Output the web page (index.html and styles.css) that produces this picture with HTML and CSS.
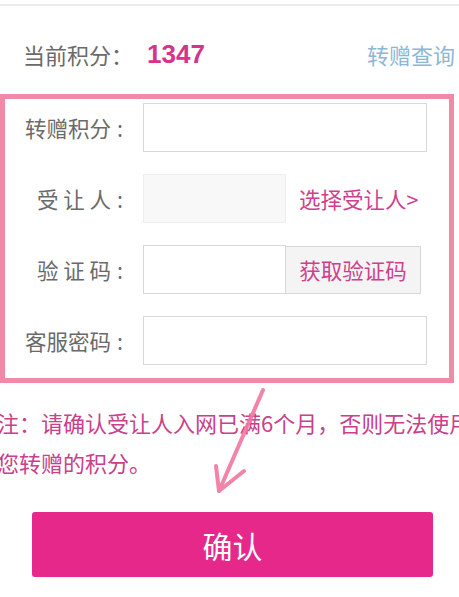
FILE: index.html
```html
<!DOCTYPE html>
<html lang="zh-CN">
<head>
<meta charset="utf-8">
<title>转赠积分</title>
<link rel="stylesheet" href="styles.css">
</head>
<body>
<div class="page">
  <div class="topline"></div>
  <div class="header">
    <div class="points"><span class="points-label">当前积分：</span><span class="points-value">1347</span></div>
    <a class="query">转赠查询</a>
  </div>
  <div class="form-box">
    <div class="row">
      <div class="label">转赠积分<span class="colon">:</span></div>
      <div class="input wide"></div>
    </div>
    <div class="row">
      <div class="label">受 让 人<span class="colon">:</span></div>
      <div class="input short disabled"></div>
      <a class="pick">选择受让人&gt;</a>
    </div>
    <div class="row">
      <div class="label">验 证 码<span class="colon">:</span></div>
      <div class="input short"></div>
      <div class="code-btn">获取验证码</div>
    </div>
    <div class="row">
      <div class="label">客服密码<span class="colon">:</span></div>
      <div class="input wide"></div>
    </div>
  </div>
  <div class="note">
    <div class="note-line">注：请确认受让人入网已满6个月，否则无法使用</div>
    <div class="note-line">您转赠的积分。</div>
  </div>
  <div class="confirm">确认</div>
  <svg class="arrow" width="459" height="597" viewBox="0 0 459 597">
    <g fill="none" stroke="#f07aa2" stroke-width="4" stroke-linecap="round" stroke-linejoin="round" opacity="0.92">
      <path d="M263 390 L219 491"/>
      <path d="M216 466 L219 491 L244 471"/>
    </g>
  </svg>
</div>
</body>
</html>
```
FILE: styles.css
```css
html, body {
  margin: 0;
  padding: 0;
  background: #ffffff;
}
body {
  width: 459px;
  height: 597px;
  overflow: hidden;
  font-family: "Noto Sans CJK SC", "Noto Sans", sans-serif;
}
.page {
  position: relative;
  width: 459px;
  height: 597px;
  overflow: hidden;
}
.topline {
  height: 4px;
  border-bottom: 2px solid #ececec;
}
.header {
  height: 88px;
  box-sizing: border-box;
  padding: 8px 4px 0 23px;
  display: flex;
  align-items: center;
  justify-content: space-between;
}
.points {
  display: flex;
  align-items: center;
}
.points-label {
  font-size: 22px;
  color: #6a6a6a;
}
.points-value {
  margin-left: 14px;
  font-family: "Liberation Sans", Arial, sans-serif;
  font-weight: bold;
  font-size: 26px;
  color: #d5348a;
}
.query {
  font-size: 22px;
  color: #8cb8d6;
}
.form-box {
  width: 454px;
  box-sizing: border-box;
  border: 5px solid #f189a9;
  padding: 4px 0 13px 0;
  display: flex;
  flex-direction: column;
  gap: 22px;
}
.row {
  display: flex;
  align-items: center;
  height: 49px;
}
.label {
  width: 138px;
  box-sizing: border-box;
  padding-right: 20px;
  text-align: right;
  font-size: 21.5px;
  color: #6a6a6a;
  white-space: pre;
}
.colon {
  margin-left: 6px;
}
.input {
  height: 49px;
  box-sizing: border-box;
  border: 1px solid #d8d8d8;
  background: #ffffff;
}
.input.wide {
  width: 284px;
}
.input.short {
  width: 143px;
}
.input.disabled {
  background: #f8f8f8;
  border-color: #eeeeee;
}
.pick {
  margin-left: 13px;
  font-size: 21.5px;
  color: #cf3f8d;
}
.code-btn {
  width: 135px;
  height: 48px;
  box-sizing: border-box;
  border: 1px solid #d8d8d8;
  border-left: none;
  background: #f4f4f4;
  display: flex;
  align-items: center;
  justify-content: center;
  font-size: 21.5px;
  color: #cf3f8d;
}
.note {
  margin-top: 19px;
  margin-left: -3px;
  font-size: 22px;
  line-height: 40px;
  color: #c9408b;
}
.note-line {
  white-space: nowrap;
}
.confirm {
  margin: 30px 0 0 32px;
  width: 401px;
  height: 65px;
  border-radius: 3px;
  background: #e5288a;
  color: #ffffff;
  font-size: 30px;
  display: flex;
  align-items: center;
  justify-content: center;
}
.arrow {
  position: absolute;
  left: 0;
  top: 0;
  pointer-events: none;
}
```
